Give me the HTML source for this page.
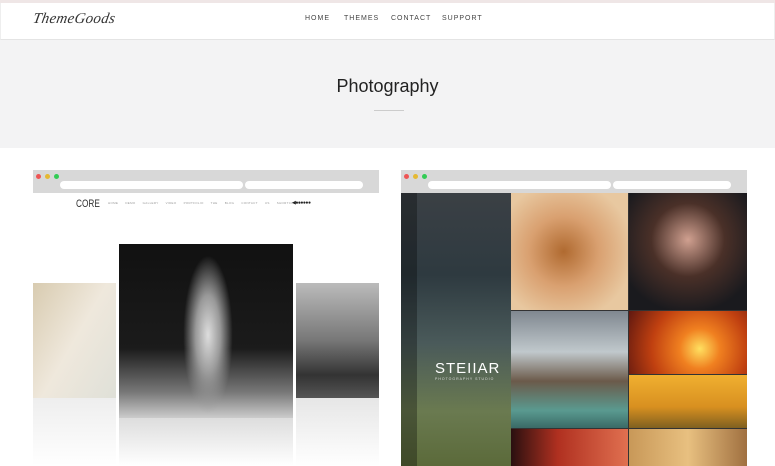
<!DOCTYPE html>
<html><head><meta charset="utf-8"><style>
*{margin:0;padding:0;box-sizing:border-box}
body{width:775px;height:466px;overflow:hidden;background:#fff;font-family:"Liberation Sans",sans-serif;position:relative}
.a{position:absolute}
.nav a{position:absolute;top:15px;font-size:7px;letter-spacing:1px;color:#444;text-decoration:none}
.chrome{background:#d8d8d8;height:23px}
.dot{position:absolute;top:4px;width:5px;height:5px;border-radius:50%}
.bar{position:absolute;top:11px;height:8px;background:#fff;border-radius:4px}
</style></head><body>
<div class="a" style="left:0;top:0;width:775px;height:3px;background:#efe6e6"></div>
<div class="a" style="left:0;top:3px;width:775px;height:37px;border-bottom:1px solid #e4e4e4;border-left:1px solid #eee;border-right:1px solid #eee"></div>
<div class="a" style="left:33px;top:11px;font-family:'Liberation Serif',serif;font-style:italic;font-size:15px;color:#333;letter-spacing:0.3px;transform:skewX(-10deg)">ThemeGoods</div>
<div class="nav"><a style="left:305px">HOME</a><a style="left:344px">THEMES</a><a style="left:391px">CONTACT</a><a style="left:442px">SUPPORT</a></div>
<div class="a" style="left:0;top:40px;width:775px;height:108px;background:#f3f3f4"></div>
<div class="a" style="left:0;top:76px;width:775px;text-align:center;font-size:18px;color:#222">Photography</div>
<div class="a" style="left:374px;top:110px;width:30px;height:1px;background:#ccc"></div>

<!-- left card -->
<div class="a" style="left:33px;top:170px;width:346px;height:296px;background:#fff;overflow:hidden">
 <div class="chrome a" style="left:0;top:0;width:346px"></div>
 <div class="dot" style="left:3px;background:#e55"></div><div class="dot" style="left:12px;background:#e5b933"></div><div class="dot" style="left:21px;background:#3c5"></div>
 <div class="bar" style="left:27px;width:183px"></div><div class="bar" style="left:212px;width:118px"></div>
 <div class="a" style="left:43px;top:28px;font-size:11px;color:#333;transform:scaleX(.75);transform-origin:left">CORE</div>
 <div class="a" style="left:75px;top:31px;font-size:3px;color:#999;letter-spacing:.3px;white-space:nowrap;word-spacing:6px">HOME DEMO GALLERY VIDEO&nbsp;PORTFOLIO THE&nbsp;BLOG CONTACT&nbsp;US SHORTCODES</div>
 <div class="a" style="left:259px;top:30px;font-size:5px;color:#222;letter-spacing:-0.5px">◀●●●●●●</div>
 <div class="a" style="left:0;top:113px;width:83px;height:115px;background:linear-gradient(120deg,#d8cbb0,#efe8dc 50%,#dfe0d8)"></div>
 <div class="a" style="left:86px;top:74px;width:174px;height:174px;background:linear-gradient(180deg,#111 0,#1b1b1b 60%,#777 85%,#ccc 100%)"></div>
 <div class="a" style="left:150px;top:85px;width:50px;height:160px;background:radial-gradient(ellipse at 50% 50%,#ddd 0,#999 35%,rgba(40,40,40,0) 70%)"></div>
 <div class="a" style="left:263px;top:113px;width:83px;height:115px;background:linear-gradient(180deg,#bbb,#777 50%,#333 80%,#555)"></div>
 <div class="a" style="left:0;top:228px;width:83px;height:68px;background:linear-gradient(#eee,#fff)"></div>
 <div class="a" style="left:86px;top:248px;width:174px;height:48px;background:linear-gradient(#ddd,#fff)"></div>
 <div class="a" style="left:263px;top:228px;width:83px;height:68px;background:linear-gradient(#e6e6e6,#fff)"></div>
</div>

<!-- right card -->
<div class="a" style="left:401px;top:170px;width:346px;height:296px;background:#333;overflow:hidden">
 <div class="chrome a" style="left:0;top:0;width:346px"></div>
 <div class="dot" style="left:3px;background:#e55"></div><div class="dot" style="left:12px;background:#e5b933"></div><div class="dot" style="left:21px;background:#3c5"></div>
 <div class="bar" style="left:27px;width:183px"></div><div class="bar" style="left:212px;width:118px"></div>
 <div class="a" style="left:0;top:23px;width:110px;height:273px;background:linear-gradient(180deg,#3b4045,#2e3a40 30%,#4a5a5a 55%,#6a7a50 80%,#5b6a3a)"></div>
 <div class="a" style="left:0;top:23px;width:16px;height:273px;background:rgba(0,0,0,.3)"></div>
 <div class="a" style="left:34px;top:190px;font-size:15px;color:#fff;letter-spacing:1px">STEIIAR</div>
 <div class="a" style="left:34px;top:207px;font-size:3.5px;color:#ddd;letter-spacing:1px">PHOTOGRAPHY STUDIO</div>
 <div class="a" style="left:110px;top:23px;width:117px;height:117px;background:radial-gradient(circle at 45% 50%,#b06a30,#d9a070 40%,#e8c8a0 80%)"></div>
 <div class="a" style="left:228px;top:23px;width:118px;height:117px;background:radial-gradient(circle at 50% 40%,#d0a090,#4a3028 40%,#1a1a1e 80%)"></div>
 <div class="a" style="left:110px;top:141px;width:117px;height:117px;background:linear-gradient(180deg,#808890,#c0c8cc 35%,#6b5a4a 60%,#5a9a90 85%,#3a6a66)"></div>
 <div class="a" style="left:228px;top:141px;width:118px;height:63px;background:radial-gradient(circle at 60% 60%,#ffe060,#f08020 25%,#c04010 60%,#601810)"></div>
 <div class="a" style="left:228px;top:205px;width:118px;height:53px;background:linear-gradient(180deg,#f0b030,#d89020 60%,#806020)"></div>
 <div class="a" style="left:110px;top:259px;width:117px;height:37px;background:linear-gradient(90deg,#2a1010,#b03020 40%,#e07050)"></div>
 <div class="a" style="left:228px;top:259px;width:118px;height:37px;background:linear-gradient(90deg,#c89858,#e8c080,#a07040)"></div>
</div>
</body></html>
